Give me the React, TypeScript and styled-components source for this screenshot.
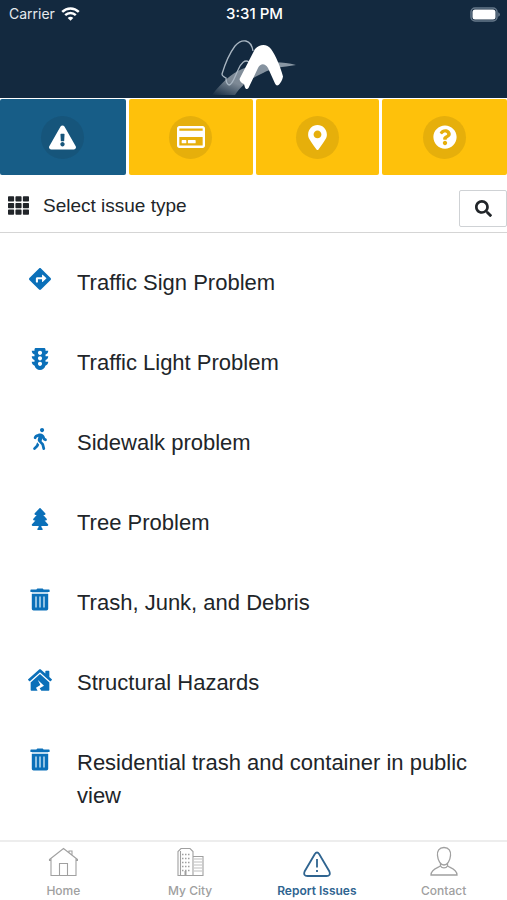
import React from "react";
import styled, { createGlobalStyle } from "styled-components";
import {
  FaExclamationTriangle,
  FaRegCreditCard,
  FaMapMarkerAlt,
  FaQuestionCircle,
  FaTh,
  FaSearch,
  FaDirections,
  FaTrafficLight,
  FaWalking,
  FaTree,
  FaHouseDamage,
} from "react-icons/fa";

const GlobalStyle = createGlobalStyle`
  * { box-sizing: border-box; }
  body {
    margin: 0;
    background: #fff;
    color: #212529;
    font-family: "Liberation Sans", Arial, sans-serif;
  }
  button { font: inherit; color: inherit; cursor: pointer; }
`;

const Screen = styled.div`
  display: flex;
  flex-direction: column;
  min-height: 100vh;
`;

const Header = styled.header`
  background: #13293f;
  color: #fff;
`;

const StatusBar = styled.div`
  display: grid;
  grid-template-columns: 1fr auto 1fr;
  align-items: center;
  height: 28px;
  padding: 0 7px 0 9px;
  font-family: Inter, sans-serif;
  font-size: 14px;
  line-height: 20px;
`;

const Carrier = styled.span`
  display: flex;
  align-items: center;
  gap: 6px;
  color: #e6eaee;
`;

const Clock = styled.time`
  font-size: 15px;
  font-weight: 500;
`;

const Battery = styled.span`
  display: flex;
  justify-content: flex-end;
`;

const Brand = styled.div`
  display: flex;
  justify-content: center;
  height: 70px;
  padding-top: 8px;
`;

const TabRow = styled.nav`
  display: grid;
  grid-template-columns: repeat(4, 1fr);
  padding-top: 1px;
`;

const Tab = styled.button<{ $active?: boolean }>`
  display: flex;
  align-items: center;
  justify-content: center;
  height: 76px;
  margin: 0 1px 0 2px;
  padding: 0;
  border: 0;
  border-radius: 2px;
  color: #fff;
  background: ${(p) => (p.$active ? "#175d87" : "#fec10b")};
  &:first-child { margin-left: 0; }
  &:last-child { margin-right: 0; }
`;

const TabDisc = styled.span<{ $active?: boolean }>`
  display: flex;
  align-items: center;
  justify-content: center;
  width: 43px;
  height: 43px;
  border-radius: 50%;
  background: ${(p) => (p.$active ? "#16557b" : "#e6af0b")};
`;

const Toolbar = styled.div`
  display: flex;
  align-items: center;
  height: 58px;
  padding-top: 9px;
  border-bottom: 1px solid #d5d5d5;
`;

const Heading = styled.h1`
  display: flex;
  align-items: center;
  flex: 1;
  gap: 14px;
  margin: 0;
  padding: 0 0 5px 8px;
  font-size: 19px;
  line-height: 30px;
  font-weight: 400;
`;

const SearchButton = styled.button`
  display: flex;
  align-items: center;
  justify-content: center;
  width: 48px;
  height: 37px;
  padding: 0;
  border: 1px solid #cfd2d5;
  border-radius: 2px;
  background: #fff;
`;

const IssueList = styled.ul`
  flex: 1;
  margin: 0;
  padding: 10px 0 0;
  list-style: none;
`;

const IssueButton = styled.button`
  display: flex;
  align-items: flex-start;
  gap: 13px;
  width: 100%;
  padding: 23px 16px 24px;
  border: 0;
  background: none;
  text-align: left;
  font-size: 22px;
  line-height: 33px;
`;

const IssueIcon = styled.span`
  display: flex;
  flex: none;
  justify-content: center;
  width: 48px;
  padding-top: 2px;
  color: #0b70b9;
`;

const BottomNav = styled.nav`
  display: grid;
  grid-template-columns: repeat(4, 1fr);
  height: 60px;
  border-top: 2px solid #ededed;
  background: #fff;
`;

const NavLink = styled.a<{ $active?: boolean }>`
  display: flex;
  flex-direction: column;
  align-items: center;
  gap: 6px;
  padding-top: 4px;
  color: ${(p) => (p.$active ? "#2f6490" : "#a0a0a0")};
  text-decoration: none;
  font-family: Inter, sans-serif;
  font-size: 12px;
  font-weight: ${(p) => (p.$active ? 600 : 500)};
  line-height: 16px;
`;

const WifiIcon = () => (
  <svg width="19" height="14" viewBox="0 0 19 14" fill="none" aria-hidden="true">
    <path d="M1.2 4.9C6 .3 13 .3 17.8 4.9" stroke="#fff" strokeWidth="2.5" />
    <path d="M4.2 8.1c3-2.9 7.6-2.9 10.6 0" stroke="#fff" strokeWidth="2.4" />
    <path d="M9.5 13.8 6.7 10.9c1.6-1.4 4-1.4 5.6 0Z" fill="#fff" />
  </svg>
);

const BatteryIcon = () => (
  <svg width="30" height="15" viewBox="0 0 30 15" fill="none" aria-hidden="true">
    <rect x="1" y="1" width="26" height="13" rx="4" stroke="#66788a" strokeWidth="1.5" />
    <rect x="2.5" y="2.5" width="23" height="10" rx="2.5" fill="#fff" />
    <path d="M28.2 5.2c2.3 1 2.3 3.6 0 4.6Z" fill="#66788a" />
  </svg>
);

const PeaksLogo = () => (
  <svg width="87" height="60" viewBox="0 0 87 60" role="img" aria-label="City logo">
    <defs>
      <linearGradient id="road" x1="0" y1="1" x2="1" y2="0">
        <stop offset="0" stopColor="#13293f" />
        <stop offset=".32" stopColor="#7d8995" />
        <stop offset="1" stopColor="#8b99a6" />
      </linearGradient>
    </defs>
    <path d="M2 59C12 46 21 38 32 33 50 26 68 24 86 29 72 31 62 32 53 37 42 42 31 49 25 59Z" fill="url(#road)" />
    <path
      d="M43 15C41 3 32 2 25 10 19 18 15 28 12 38c0 2 2 3 4 4 0 3 1 6 3 7 4-1 6-9 9-15 3-7 7-11 11-8"
      fill="none"
      stroke="#a9b6c2"
      strokeWidth="1.3"
    />
    <path
      d="M29.5 43 45 13C50 7.500 57 7.500 61 13 66 20 70 30 73 40.500 72.500 44 70 48 68.500 49 67 50 66 49.500 65 47.500L58 32C55 27 50.500 27 48 32L38.500 52C37.500 53.500 36 53.500 35 51.500L34 48Q30 46.500 29.500 43Z"
      fill="#fff"
    />
  </svg>
);

const TrashIcon = () => (
  <svg width="20" height="23" viewBox="0 0 20 23" aria-hidden="true">
    <path d="M1 1.6h5.4L7.3.4h5.4l.9 1.2H19q.6 0 .6.6v1.2q0 .6-.6.6H1q-.6 0-.6-.6V2.2q0-.6.6-.6Z" fill="currentColor" />
    <path d="M1.8 5.8h16.4v15q0 1.7-1.7 1.7h-13q-1.7 0-1.7-1.7Z" fill="currentColor" />
    <path d="M2 4.8h16M6 8.4v11.2M10 8.4v11.2M14 8.4v11.2" stroke="#bcdcf1" strokeWidth="1.5" />
  </svg>
);

const HomeIcon = () => (
  <svg width="30" height="31" viewBox="0 0 30 31" fill="none" stroke="currentColor" strokeWidth="1.1" aria-hidden="true">
    <path d="M1.5 13.5 15.5 2.5l14 11M3 12.5V29.5h25V12.5M11.5 29.5V17.5h8v12M21 6.5V5h3v4" />
    <path d="M1.5 13v1.5H3M29.5 13v1.5H28" />
  </svg>
);

const CityIcon = () => (
  <svg width="28" height="31" viewBox="0 0 28 31" fill="none" stroke="currentColor" strokeWidth="1.1" aria-hidden="true">
    <path d="M2 29.5V5.5l3-3h9l3 3v24ZM17 10.500h10v19H17M4.500 5v24" />
    <path d="M6 8.500h9M6 12.500h9M6 16.500h9M6 20.500h9M6 24.500h9" strokeDasharray="1.5 1.5" strokeWidth="1.4" />
    <path d="M18 13h8M18 16h8M18 19h8M18 22h8M18 25h8" strokeWidth=".7" />
    <path d="M9.500 29v-4" strokeWidth="2" />
  </svg>
);

const AlertIcon = () => (
  <svg width="28" height="31" viewBox="0 0 28 31" fill="none" stroke="currentColor" strokeWidth="1.8" aria-hidden="true">
    <path d="M11.7 8.2 1.6 25.5Q0 30 4.5 30h19q4.5 0 2.9-4.5L16.3 8.2Q14 4.8 11.7 8.2Z" />
    <path d="M14 13v8.5M14 24v2" />
  </svg>
);

const PersonIcon = () => (
  <svg width="28" height="31" viewBox="0 0 28 31" fill="none" stroke="currentColor" strokeWidth="1.3" aria-hidden="true">
    <path d="M14 1.5c5 0 7 3.5 6.5 8-.4 5-3 9.500-6.500 9.500s-6.100-4.500-6.500-9.500c-.5-4.500 1.500-8 6.500-8Z" />
    <path d="M10.500 17v2.500c0 2-9.500 2.500-9.500 9.500h26c0-7-9.500-7.500-9.500-9.500V17" />
    <path d="M10.500 20c1.500 2.500 5.500 2.500 7 0" />
  </svg>
);

const tabs = [
  { label: "Report an issue", icon: <FaExclamationTriangle size={27} />, active: true },
  { label: "Payments", icon: <FaRegCreditCard size={28} /> },
  { label: "Map", icon: <FaMapMarkerAlt size={25} /> },
  { label: "Help", icon: <FaQuestionCircle size={24} /> },
];

const issues = [
  { name: "Traffic Sign Problem", icon: <FaDirections size={22} /> },
  { name: "Traffic Light Problem", icon: <FaTrafficLight size={22} /> },
  { name: "Sidewalk problem", icon: <FaWalking size={22} /> },
  { name: "Tree Problem", icon: <FaTree size={22} /> },
  { name: "Trash, Junk, and Debris", icon: <TrashIcon /> },
  { name: "Structural Hazards", icon: <FaHouseDamage size={24} /> },
  { name: "Residential trash and container in public view", icon: <TrashIcon /> },
];

const links = [
  { label: "Home", icon: <HomeIcon /> },
  { label: "My City", icon: <CityIcon /> },
  { label: "Report Issues", icon: <AlertIcon />, active: true },
  { label: "Contact", icon: <PersonIcon /> },
];

export default function App() {
  return (
    <>
      <GlobalStyle />
      <Screen>
        <Header>
          <StatusBar>
            <Carrier>
              Carrier <WifiIcon />
            </Carrier>
            <Clock>3:31 PM</Clock>
            <Battery>
              <BatteryIcon />
            </Battery>
          </StatusBar>
          <Brand>
            <PeaksLogo />
          </Brand>
        </Header>
        <TabRow aria-label="Services">
          {tabs.map((t) => (
            <Tab key={t.label} type="button" aria-label={t.label} $active={t.active}>
              <TabDisc $active={t.active}>{t.icon}</TabDisc>
            </Tab>
          ))}
        </TabRow>
        <Toolbar>
          <Heading>
            <FaTh size={21} aria-hidden="true" />
            Select issue type
          </Heading>
          <SearchButton type="button" aria-label="Search">
            <FaSearch size={17} />
          </SearchButton>
        </Toolbar>
        <IssueList>
          {issues.map((i) => (
            <li key={i.name}>
              <IssueButton type="button">
                <IssueIcon>{i.icon}</IssueIcon>
                <span>{i.name}</span>
              </IssueButton>
            </li>
          ))}
        </IssueList>
        <BottomNav aria-label="Main">
          {links.map((l) => (
            <NavLink key={l.label} href="#" $active={l.active} aria-current={l.active ? "page" : undefined}>
              {l.icon}
              {l.label}
            </NavLink>
          ))}
        </BottomNav>
      </Screen>
    </>
  );
}
